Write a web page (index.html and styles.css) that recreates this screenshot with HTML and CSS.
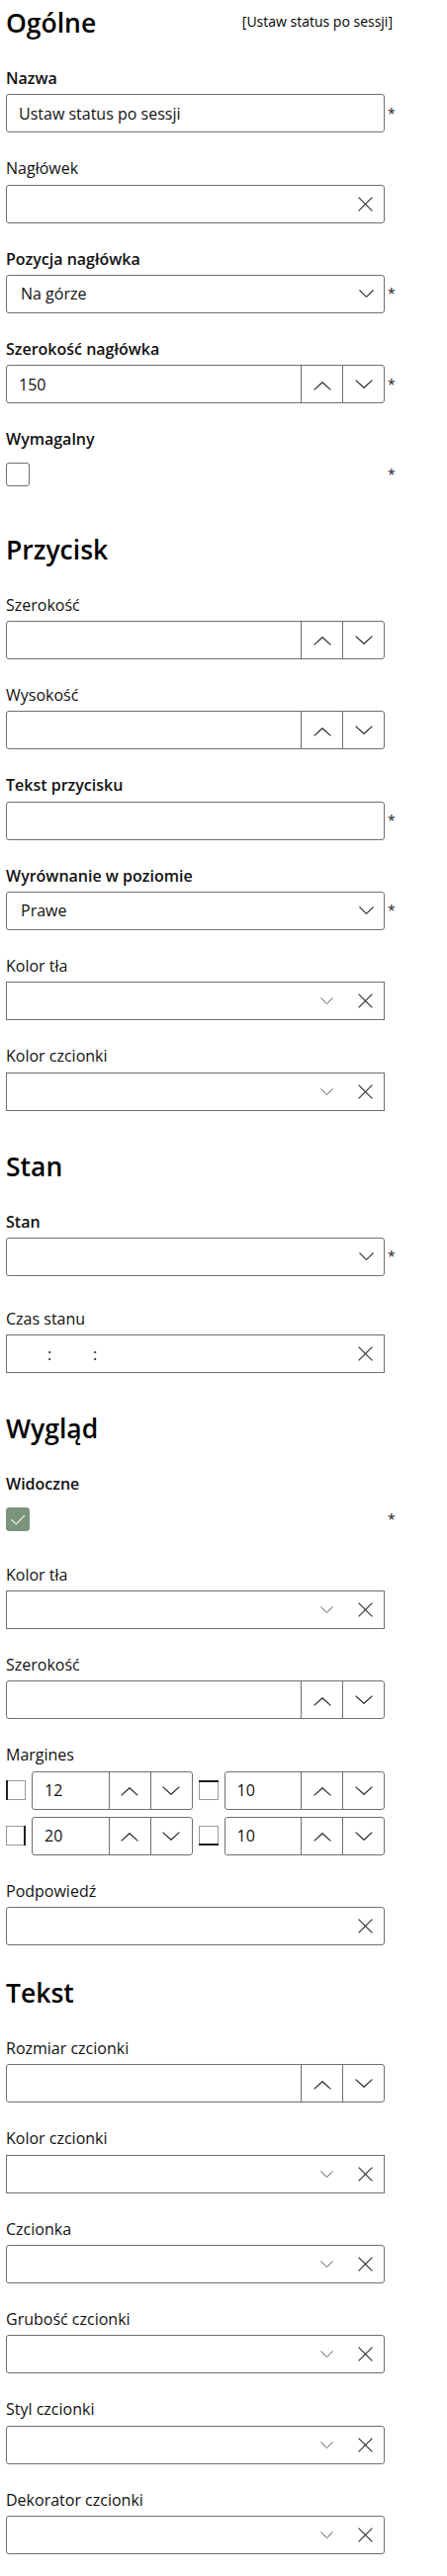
FILE: index.html
```html
<!DOCTYPE html>
<html lang="pl">
<head>
<meta charset="utf-8">
<title>Ustaw status po sessji</title>
<link rel="stylesheet" href="styles.css">
</head>
<body>
<svg class="sprite" xmlns="http://www.w3.org/2000/svg">
  <symbol id="i-chev" viewBox="0 0 15 8"><path d="M0.5 0.5 L7.5 7.4 L14.5 0.5" fill="none" stroke="currentColor" stroke-width="1.1"/></symbol>
  <symbol id="i-x" viewBox="0 0 15 15"><path d="M0.6 0.6 L14.4 14.4 M14.4 0.6 L0.6 14.4" fill="none" stroke="currentColor" stroke-width="1.2"/></symbol>
  <symbol id="i-up" viewBox="0 0 18 9"><path d="M0.6 8.4 L9 0.7 L17.4 8.4" fill="none" stroke="currentColor" stroke-width="1.2"/></symbol>
  <symbol id="i-down" viewBox="0 0 18 9"><path d="M0.6 0.6 L9 8.3 L17.4 0.6" fill="none" stroke="currentColor" stroke-width="1.2"/></symbol>
  <symbol id="i-m-left" viewBox="0 0 20 20"><rect x="0.5" y="0.5" width="19" height="19" fill="none" stroke="#333" stroke-dasharray="1 1"/><rect x="0" y="0" width="2" height="20" fill="#1e1e1e"/></symbol>
  <symbol id="i-m-top" viewBox="0 0 20 20"><rect x="0.5" y="0.5" width="19" height="19" fill="none" stroke="#333" stroke-dasharray="1 1"/><rect x="0" y="0" width="20" height="2" fill="#1e1e1e"/></symbol>
  <symbol id="i-m-right" viewBox="0 0 20 20"><rect x="0.5" y="0.5" width="19" height="19" fill="none" stroke="#333" stroke-dasharray="1 1"/><rect x="18" y="0" width="2" height="20" fill="#1e1e1e"/></symbol>
  <symbol id="i-m-bottom" viewBox="0 0 20 20"><rect x="0.5" y="0.5" width="19" height="19" fill="none" stroke="#333" stroke-dasharray="1 1"/><rect x="0" y="18" width="20" height="2" fill="#1e1e1e"/></symbol>
</svg>

<div class="panel">

  <section class="section">
    <div class="section-head">
      <h2 class="section-title">Ogólne</h2>
      <span class="section-ref">[Ustaw status po sessji]</span>
    </div>

    <div class="field">
      <div class="label label--strong">Nazwa</div>
      <div class="row">
        <div class="control"><span class="control__value">Ustaw status po sessji</span></div>
        <span class="req">*</span>
      </div>
    </div>

    <div class="field">
      <div class="label">Nagłówek</div>
      <div class="row">
        <div class="control"><span class="control__value"></span><span class="icon-clear"><svg class="ic-x"><use href="#i-x"/></svg></span></div>
        <span class="req"></span>
      </div>
    </div>

    <div class="field">
      <div class="label label--strong">Pozycja nagłówka</div>
      <div class="row">
        <div class="control control--select"><span class="control__value">Na górze</span><span class="icon-chev"><svg class="ic-chev"><use href="#i-chev"/></svg></span></div>
        <span class="req">*</span>
      </div>
    </div>

    <div class="field">
      <div class="label label--strong">Szerokość nagłówka</div>
      <div class="row">
        <div class="control control--spin"><span class="control__value">150</span><span class="spin-btn"><svg class="ic-up"><use href="#i-up"/></svg></span><span class="spin-btn"><svg class="ic-down"><use href="#i-down"/></svg></span></div>
        <span class="req">*</span>
      </div>
    </div>

    <div class="field">
      <div class="label label--strong">Wymagalny</div>
      <div class="row row--check">
        <span class="checkbox"></span>
        <span class="req">*</span>
      </div>
    </div>
  </section>

  <section class="section">
    <div class="section-head">
      <h2 class="section-title">Przycisk</h2>
    </div>

    <div class="field">
      <div class="label">Szerokość</div>
      <div class="row">
        <div class="control control--spin"><span class="control__value"></span><span class="spin-btn"><svg class="ic-up"><use href="#i-up"/></svg></span><span class="spin-btn"><svg class="ic-down"><use href="#i-down"/></svg></span></div>
        <span class="req"></span>
      </div>
    </div>

    <div class="field">
      <div class="label">Wysokość</div>
      <div class="row">
        <div class="control control--spin"><span class="control__value"></span><span class="spin-btn"><svg class="ic-up"><use href="#i-up"/></svg></span><span class="spin-btn"><svg class="ic-down"><use href="#i-down"/></svg></span></div>
        <span class="req"></span>
      </div>
    </div>

    <div class="field">
      <div class="label label--strong">Tekst przycisku</div>
      <div class="row">
        <div class="control"><span class="control__value"></span></div>
        <span class="req">*</span>
      </div>
    </div>

    <div class="field">
      <div class="label label--strong">Wyrównanie w poziomie</div>
      <div class="row">
        <div class="control control--select"><span class="control__value">Prawe</span><span class="icon-chev"><svg class="ic-chev"><use href="#i-chev"/></svg></span></div>
        <span class="req">*</span>
      </div>
    </div>

    <div class="field">
      <div class="label">Kolor tła</div>
      <div class="row">
        <div class="control control--square"><span class="control__value"></span><span class="icon-chev icon-chev--soft"><svg class="ic-chev"><use href="#i-chev"/></svg></span><span class="icon-clear"><svg class="ic-x"><use href="#i-x"/></svg></span></div>
        <span class="req"></span>
      </div>
    </div>

    <div class="field">
      <div class="label">Kolor czcionki</div>
      <div class="row">
        <div class="control control--square"><span class="control__value"></span><span class="icon-chev icon-chev--soft"><svg class="ic-chev"><use href="#i-chev"/></svg></span><span class="icon-clear"><svg class="ic-x"><use href="#i-x"/></svg></span></div>
        <span class="req"></span>
      </div>
    </div>
  </section>

  <section class="section">
    <div class="section-head">
      <h2 class="section-title">Stan</h2>
    </div>

    <div class="field field--spaced">
      <div class="label label--strong">Stan</div>
      <div class="row">
        <div class="control control--select"><span class="control__value"></span><span class="icon-chev"><svg class="ic-chev"><use href="#i-chev"/></svg></span></div>
        <span class="req">*</span>
      </div>
    </div>

    <div class="field">
      <div class="label">Czas stanu</div>
      <div class="row">
        <div class="control control--square">
          <span class="time">
            <span class="time__seg time__seg--h"></span><span class="time__sep">:</span><span class="time__seg"></span><span class="time__sep">:</span><span class="time__seg"></span>
          </span>
          <span class="icon-clear"><svg class="ic-x"><use href="#i-x"/></svg></span>
        </div>
        <span class="req"></span>
      </div>
    </div>
  </section>

  <section class="section">
    <div class="section-head">
      <h2 class="section-title">Wygląd</h2>
    </div>

    <div class="field">
      <div class="label label--strong">Widoczne</div>
      <div class="row row--check">
        <span class="checkbox checkbox--on"><svg viewBox="0 0 24 24" class="checkbox__mark"><path d="M4.5 12.2 L10.3 17.3 L19.6 7.6" fill="none" stroke="#fff" stroke-width="1.1"/></svg></span>
        <span class="req">*</span>
      </div>
    </div>

    <div class="field">
      <div class="label">Kolor tła</div>
      <div class="row">
        <div class="control control--square"><span class="control__value"></span><span class="icon-chev icon-chev--soft"><svg class="ic-chev"><use href="#i-chev"/></svg></span><span class="icon-clear"><svg class="ic-x"><use href="#i-x"/></svg></span></div>
        <span class="req"></span>
      </div>
    </div>

    <div class="field">
      <div class="label">Szerokość</div>
      <div class="row">
        <div class="control control--spin"><span class="control__value"></span><span class="spin-btn"><svg class="ic-up"><use href="#i-up"/></svg></span><span class="spin-btn"><svg class="ic-down"><use href="#i-down"/></svg></span></div>
        <span class="req"></span>
      </div>
    </div>

    <div class="field">
      <div class="label">Margines</div>
      <div class="row">
        <div class="margins">
          <div class="margin-item">
            <svg class="margin-icon"><use href="#i-m-left"/></svg>
            <div class="control control--spin"><span class="control__value">12</span><span class="spin-btn"><svg class="ic-up"><use href="#i-up"/></svg></span><span class="spin-btn"><svg class="ic-down"><use href="#i-down"/></svg></span></div>
          </div>
          <div class="margin-item">
            <svg class="margin-icon"><use href="#i-m-top"/></svg>
            <div class="control control--spin"><span class="control__value">10</span><span class="spin-btn"><svg class="ic-up"><use href="#i-up"/></svg></span><span class="spin-btn"><svg class="ic-down"><use href="#i-down"/></svg></span></div>
          </div>
          <div class="margin-item">
            <svg class="margin-icon"><use href="#i-m-right"/></svg>
            <div class="control control--spin"><span class="control__value">20</span><span class="spin-btn"><svg class="ic-up"><use href="#i-up"/></svg></span><span class="spin-btn"><svg class="ic-down"><use href="#i-down"/></svg></span></div>
          </div>
          <div class="margin-item">
            <svg class="margin-icon"><use href="#i-m-bottom"/></svg>
            <div class="control control--spin"><span class="control__value">10</span><span class="spin-btn"><svg class="ic-up"><use href="#i-up"/></svg></span><span class="spin-btn"><svg class="ic-down"><use href="#i-down"/></svg></span></div>
          </div>
        </div>
        <span class="req"></span>
      </div>
    </div>

    <div class="field">
      <div class="label">Podpowiedź</div>
      <div class="row">
        <div class="control"><span class="control__value"></span><span class="icon-clear"><svg class="ic-x"><use href="#i-x"/></svg></span></div>
        <span class="req"></span>
      </div>
    </div>
  </section>

  <section class="section section--tight">
    <div class="section-head">
      <h2 class="section-title">Tekst</h2>
    </div>

    <div class="field">
      <div class="label">Rozmiar czcionki</div>
      <div class="row">
        <div class="control control--spin"><span class="control__value"></span><span class="spin-btn"><svg class="ic-up"><use href="#i-up"/></svg></span><span class="spin-btn"><svg class="ic-down"><use href="#i-down"/></svg></span></div>
        <span class="req"></span>
      </div>
    </div>

    <div class="field">
      <div class="label">Kolor czcionki</div>
      <div class="row">
        <div class="control control--square"><span class="control__value"></span><span class="icon-chev icon-chev--soft"><svg class="ic-chev"><use href="#i-chev"/></svg></span><span class="icon-clear"><svg class="ic-x"><use href="#i-x"/></svg></span></div>
        <span class="req"></span>
      </div>
    </div>

    <div class="field">
      <div class="label">Czcionka</div>
      <div class="row">
        <div class="control"><span class="control__value"></span><span class="icon-chev icon-chev--soft"><svg class="ic-chev"><use href="#i-chev"/></svg></span><span class="icon-clear"><svg class="ic-x"><use href="#i-x"/></svg></span></div>
        <span class="req"></span>
      </div>
    </div>

    <div class="field">
      <div class="label">Grubość czcionki</div>
      <div class="row">
        <div class="control"><span class="control__value"></span><span class="icon-chev icon-chev--soft"><svg class="ic-chev"><use href="#i-chev"/></svg></span><span class="icon-clear"><svg class="ic-x"><use href="#i-x"/></svg></span></div>
        <span class="req"></span>
      </div>
    </div>

    <div class="field">
      <div class="label">Styl czcionki</div>
      <div class="row">
        <div class="control"><span class="control__value"></span><span class="icon-chev icon-chev--soft"><svg class="ic-chev"><use href="#i-chev"/></svg></span><span class="icon-clear"><svg class="ic-x"><use href="#i-x"/></svg></span></div>
        <span class="req"></span>
      </div>
    </div>

    <div class="field">
      <div class="label">Dekorator czcionki</div>
      <div class="row">
        <div class="control"><span class="control__value"></span><span class="icon-chev icon-chev--soft"><svg class="ic-chev"><use href="#i-chev"/></svg></span><span class="icon-clear"><svg class="ic-x"><use href="#i-x"/></svg></span></div>
        <span class="req"></span>
      </div>
    </div>
  </section>

</div>
</body>
</html>
```

FILE: styles.css
```css
* {
  box-sizing: border-box;
}

html, body {
  margin: 0;
  background: #ffffff;
}

body {
  font-family: "Open Sans", "Noto Sans", "DejaVu Sans", sans-serif;
  color: #111111;
}

.sprite {
  position: absolute;
  width: 0;
  height: 0;
  overflow: hidden;
}

.panel {
  width: 400px;
  padding: 5px 0 20px 6px;
}

.section + .section {
  padding-top: 12px;
}

.section.section--tight {
  padding-top: 4px;
}

.section-head {
  display: flex;
  justify-content: space-between;
  align-items: flex-start;
  height: 36px;
  margin-bottom: 28px;
  padding-right: 3px;
}

.section-title {
  margin: 0;
  font-size: 26.5px;
  line-height: 36px;
  font-weight: 600;
  color: #000000;
}

.section-ref {
  margin-top: 7px;
  font-size: 14px;
  line-height: 19px;
  color: #000000;
}

.field {
  margin-bottom: 26px;
}

.field--spaced {
  margin-bottom: 33px;
}

.label {
  font-size: 16px;
  line-height: 21.333px;
  margin-bottom: 5px;
  white-space: nowrap;
}

.label--strong {
  font-weight: 600;
}

.row {
  display: grid;
  grid-template-columns: 383px 11px;
  align-items: center;
}

.row--check {
  height: 39px;
}

.req {
  padding-left: 3px;
  font-size: 14px;
  line-height: 14px;
  color: #222222;
}

.control {
  display: flex;
  align-items: center;
  height: 39px;
  border: 1px solid #6f6f6f;
  border-radius: 3px;
  background: #ffffff;
  font-size: 16px;
  color: #111111;
  overflow: hidden;
}

.control--square {
  border-radius: 0;
}

.control__value {
  flex: 1;
  min-width: 0;
  padding-left: 12px;
  white-space: nowrap;
}

.control--select .control__value {
  padding-left: 14px;
}

.icon-chev {
  display: flex;
  align-items: center;
  padding-right: 10px;
  color: #333333;
}

.icon-chev--soft {
  padding-right: 24px;
  color: #555555;
}

.icon-chev--soft .ic-chev {
  width: 15px;
  height: 7px;
}

.ic-chev {
  width: 15px;
  height: 8px;
  display: block;
}

.icon-clear {
  display: flex;
  align-items: center;
  padding-right: 11px;
  color: #333333;
}

.ic-x {
  width: 15px;
  height: 15px;
  display: block;
}

.control--spin .control__value {
  padding-left: 12px;
}

.spin-btn {
  flex: none;
  width: 42px;
  height: 100%;
  border-left: 1px solid #6f6f6f;
  display: flex;
  align-items: center;
  justify-content: center;
  color: #2a2a2a;
}

.ic-up {
  width: 18px;
  height: 9px;
  display: block;
  margin-top: 3px;
}

.ic-down {
  width: 18px;
  height: 9px;
  display: block;
}

.checkbox {
  display: block;
  width: 24px;
  height: 24px;
  border: 1px solid #6f6f6f;
  border-radius: 3px;
  background: #ffffff;
}

.checkbox--on {
  background: #7b947b;
  border-color: #7b947b;
}

.checkbox__mark {
  display: block;
  width: 22px;
  height: 22px;
  margin: 0;
}

.time {
  flex: 1;
  display: flex;
  align-items: center;
  padding-left: 12px;
  font-size: 16px;
}

.time__seg {
  width: 42px;
}

.time__seg--h {
  width: 29px;
}

.time__sep {
  width: 4px;
  text-align: center;
}

.margins {
  display: grid;
  grid-template-columns: 1fr 1fr;
  column-gap: 6px;
  row-gap: 7px;
}

.margin-item {
  display: flex;
  align-items: center;
  gap: 6px;
}

.margin-item .control {
  flex: 1;
  min-width: 0;
}

.margin-icon {
  flex: none;
  width: 20px;
  height: 20px;
  display: block;
}
```
